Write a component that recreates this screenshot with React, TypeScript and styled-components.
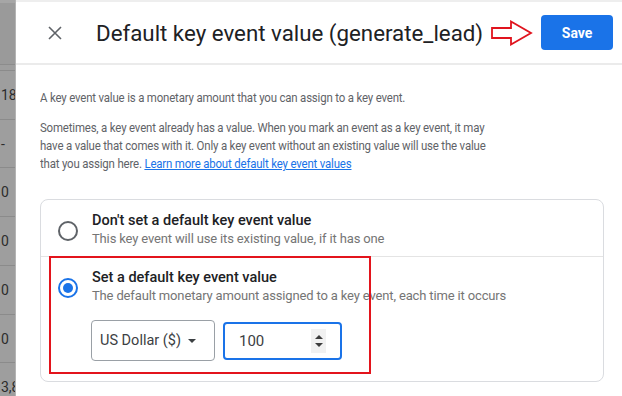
import React from 'react'
import styled, { createGlobalStyle } from 'styled-components'

const GlobalStyle = createGlobalStyle`
	html, body {
		margin: 0;
		padding: 0;
		background: #ffffff;
	}
	body {
		font-family: Roboto, 'Liberation Sans', Arial, sans-serif;
		-webkit-font-smoothing: antialiased;
	}
`

type RowProps = { label: string; height: number }

const tableRows: Array<RowProps> = [
	{ label: '18', height: 49 },
	{ label: '-', height: 48 },
	{ label: '0', height: 49 },
	{ label: '0', height: 49 },
	{ label: '0', height: 49 },
	{ label: '0', height: 48 },
	{ label: '3,8', height: 49 }
]

const CloseIcon = () => (
	<svg width="24" height="24" viewBox="0 0 24 24">
		<path d="M6 6 L18 18 M18 6 L6 18" stroke="#5f6368" strokeWidth="1.6" fill="none" />
	</svg>
)

const ArrowMark = () => (
	<svg width="42" height="26" viewBox="0 0 42 26">
		<path
			d="M1 8 L20 8 L20 1.5 L40 13 L20 24.5 L20 18 L1 18 Z"
			fill="#ffffff"
			stroke="#e0141e"
			strokeWidth="1.8"
			strokeLinejoin="miter"
		/>
	</svg>
)

const App = () => {
	return (
		<>
			<GlobalStyle />
			<Page>
				<Backdrop>
					<BackdropHead />
					{tableRows.map((row, i) => (
						<BackdropRow key={i} style={{ height: row.height }}>
							{row.label}
						</BackdropRow>
					))}
				</Backdrop>
				<Dialog>
					<Header>
						<IconButton aria-label="Close">
							<CloseIcon />
						</IconButton>
						<Title>Default key event value (generate_lead)</Title>
						<ArrowMark />
						<SaveButton>Save</SaveButton>
					</Header>
					<Body>
						<Paragraph>A key event value is a monetary amount that you can assign to a key event.</Paragraph>
						<Paragraph>
							Sometimes, a key event already has a value. When you mark an event as a key event, it may
							<br />
							have a value that comes with it. Only a key event without an existing value will use the value
							<br />
							that you assign here. <Link href="#">Learn more about default key event values</Link>
						</Paragraph>
						<Card>
							<Option>
								<Radio checked={false} />
								<OptionText>
									<OptionTitle>Don't set a default key event value</OptionTitle>
									<OptionCaption>This key event will use its existing value, if it has one</OptionCaption>
								</OptionText>
							</Option>
							<Option $divider>
								<Highlight />
								<Radio checked />
								<OptionText>
									<OptionTitle>Set a default key event value</OptionTitle>
									<OptionCaption>
										The default monetary amount assigned to a key event, each time it occurs
									</OptionCaption>
									<Controls>
										<Select>
											US Dollar ($)
											<Caret />
										</Select>
										<NumberField>
											<span>100</span>
											<Spinner>
												<SpinUp />
												<SpinDown />
											</Spinner>
										</NumberField>
									</Controls>
								</OptionText>
							</Option>
						</Card>
					</Body>
				</Dialog>
			</Page>
		</>
	)
}

const Page = styled.div`
	display: flex;
	width: 622px;
	height: 396px;
	overflow: hidden;
`

const Backdrop = styled.div`
	width: 16px;
	flex-shrink: 0;
	background: #9e9e9e;
	overflow: hidden;
	border-right: 1px solid #b4b4b4;
	box-sizing: border-box;
`

const BackdropHead = styled.div`
	height: 65px;
	border-top: 3px solid #a6a6a6;
	box-sizing: border-box;
	background: #9a9a9a;
	border-bottom: 1px solid #8c8c8c;
	margin-bottom: 5px;
`

const BackdropRow = styled.div`
	display: flex;
	align-items: center;
	border-top: 1px solid #8b8b8b;
	box-sizing: border-box;
	padding-left: 1px;
	font-size: 14px;
	color: #2c2c2c;
	white-space: nowrap;
`

const Dialog = styled.div`
	flex: 1;
	display: flex;
	flex-direction: column;
	border-top: 2px solid #eeeeee;
	background: #ffffff;
`

const Header = styled.div`
	height: 61px;
	display: flex;
	align-items: center;
	gap: 8px;
	padding: 0 9px 0 27px;
	border-bottom: 2px solid #ebebeb;
`

const IconButton = styled.button`
	width: 24px;
	height: 24px;
	padding: 0;
	border: none;
	background: none;
	display: flex;
	align-items: center;
	justify-content: center;
	margin-right: 21px;
	flex-shrink: 0;
	cursor: pointer;
`

const Title = styled.h1`
	margin: 0;
	flex: 1;
	min-width: 0;
	font-size: 22.3px;
	font-weight: 400;
	color: #202124;
	white-space: nowrap;
`

const SaveButton = styled.button`
	width: 72px;
	height: 35px;
	flex-shrink: 0;
	border: none;
	border-radius: 4px;
	background: #1a73e8;
	color: #ffffff;
	font-family: Roboto, sans-serif;
	font-size: 14px;
	font-weight: 700;
	cursor: pointer;
`

const Body = styled.div`
	padding: 24px 18px 0 24px;
`

/* the source shot is squeezed sideways, so the body copy is narrowed to match */
const Paragraph = styled.p`
	margin: 0 0 12px;
	font-size: 13px;
	line-height: 18px;
	letter-spacing: -0.2px;
	color: #5f6368;
	white-space: nowrap;
	transform: scaleX(0.88);
	transform-origin: left center;
`

const Link = styled.a`
	color: #1a73e8;
	text-decoration: underline;
`

const Card = styled.div`
	margin-top: 26px;
	border: 1px solid #dadce0;
	border-radius: 8px;
`

const Option = styled.div<{ $divider?: boolean }>`
	position: relative;
	display: flex;
	align-items: flex-start;
	gap: 14px;
	padding: ${(p) => (p.$divider ? '12px 16px 20px 17px' : '12px 16px 8px 17px')};
	border-top: ${(p) => (p.$divider ? '1px solid #e4e4e4' : 'none')};
`

const Radio = styled.span<{ checked: boolean }>`
	width: 20px;
	height: 20px;
	margin-top: 9px;
	box-sizing: border-box;
	border-radius: 50%;
	border: 2px solid ${(p) => (p.checked ? '#1a73e8' : '#5f6368')};
	display: flex;
	align-items: center;
	justify-content: center;
	flex-shrink: 0;

	&::after {
		content: '';
		display: ${(p) => (p.checked ? 'block' : 'none')};
		width: 10px;
		height: 10px;
		border-radius: 50%;
		background: #1a73e8;
	}
`

const OptionText = styled.div`
	display: flex;
	flex-direction: column;
`

const OptionTitle = styled.div`
	font-size: 14.5px;
	font-weight: 500;
	line-height: 18px;
	color: #202124;
`

const OptionCaption = styled.div`
	font-size: 13px;
	line-height: 18px;
	color: #757575;
	letter-spacing: -0.15px;
`

const Controls = styled.div`
	display: flex;
	align-items: center;
	gap: 8px;
	margin-top: 15px;
	margin-left: -1px;
`

const Select = styled.div`
	width: 124px;
	height: 41px;
	box-sizing: border-box;
	border: 1px solid #9aa0a6;
	border-radius: 4px;
	display: flex;
	align-items: center;
	padding-left: 8px;
	font-size: 14.5px;
	color: #3c4043;
	gap: 7px;
`

const Caret = styled.span`
	width: 0;
	height: 0;
	border-left: 4px solid transparent;
	border-right: 4px solid transparent;
	border-top: 4px solid #3c4043;
`

const NumberField = styled.div`
	width: 119px;
	height: 38px;
	box-sizing: border-box;
	border: 2px solid #1a73e8;
	border-radius: 4px;
	display: flex;
	align-items: center;
	justify-content: space-between;
	padding: 0 14px 0 14px;
	font-size: 15px;
	color: #3c4043;
`

const Spinner = styled.span`
	width: 15px;
	height: 24px;
	background: #f1f1f1;
	display: flex;
	flex-direction: column;
	align-items: center;
	justify-content: center;
	gap: 4px;
`

const SpinUp = styled.span`
	width: 0;
	height: 0;
	border-left: 4px solid transparent;
	border-right: 4px solid transparent;
	border-bottom: 4px solid #3c3c3c;
`

const SpinDown = styled.span`
	width: 0;
	height: 0;
	border-left: 4px solid transparent;
	border-right: 4px solid transparent;
	border-top: 4px solid #3c3c3c;
`

const Highlight = styled.span`
	position: absolute;
	left: 8px;
	top: -1px;
	width: 322px;
	height: 118px;
	box-sizing: border-box;
	border: 2px solid #e3141c;
	pointer-events: none;
`

export default App
